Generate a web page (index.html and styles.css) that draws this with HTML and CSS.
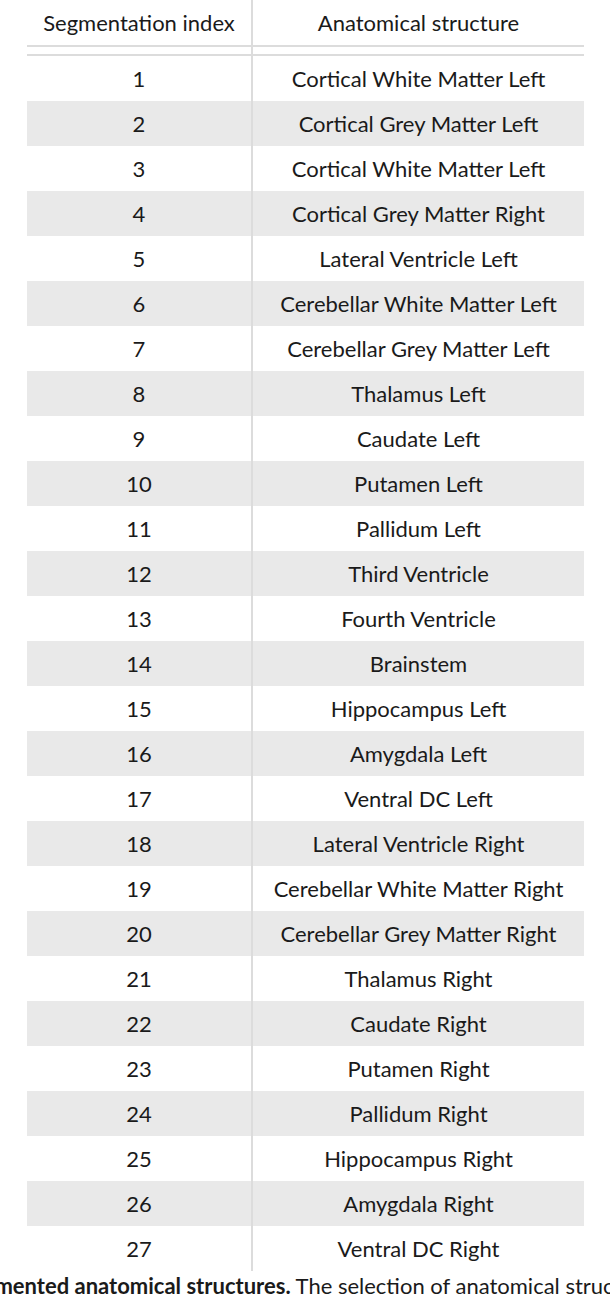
FILE: index.html
```html
<!DOCTYPE html>
<html>
<head>
<meta charset="utf-8">
<link rel="stylesheet" href="styles.css">
</head>
<body>
<div class="wrap">
<table class="seg">
<thead>
<tr><th class="idx">Segmentation index</th><th class="name">Anatomical structure</th></tr>
<tr class="sep"><td class="idx"></td><td class="name"></td></tr>
</thead>
<tbody>
<tr><td class="idx">1</td><td class="name">Cortical White Matter Left</td></tr>
<tr><td class="idx">2</td><td class="name">Cortical Grey Matter Left</td></tr>
<tr><td class="idx">3</td><td class="name">Cortical White Matter Left</td></tr>
<tr><td class="idx">4</td><td class="name">Cortical Grey Matter Right</td></tr>
<tr><td class="idx">5</td><td class="name">Lateral Ventricle Left</td></tr>
<tr><td class="idx">6</td><td class="name">Cerebellar White Matter Left</td></tr>
<tr><td class="idx">7</td><td class="name">Cerebellar Grey Matter Left</td></tr>
<tr><td class="idx">8</td><td class="name">Thalamus Left</td></tr>
<tr><td class="idx">9</td><td class="name">Caudate Left</td></tr>
<tr><td class="idx">10</td><td class="name">Putamen Left</td></tr>
<tr><td class="idx">11</td><td class="name">Pallidum Left</td></tr>
<tr><td class="idx">12</td><td class="name">Third Ventricle</td></tr>
<tr><td class="idx">13</td><td class="name">Fourth Ventricle</td></tr>
<tr><td class="idx">14</td><td class="name">Brainstem</td></tr>
<tr><td class="idx">15</td><td class="name">Hippocampus Left</td></tr>
<tr><td class="idx">16</td><td class="name">Amygdala Left</td></tr>
<tr><td class="idx">17</td><td class="name">Ventral DC Left</td></tr>
<tr><td class="idx">18</td><td class="name">Lateral Ventricle Right</td></tr>
<tr><td class="idx">19</td><td class="name">Cerebellar White Matter Right</td></tr>
<tr><td class="idx">20</td><td class="name">Cerebellar Grey Matter Right</td></tr>
<tr><td class="idx">21</td><td class="name">Thalamus Right</td></tr>
<tr><td class="idx">22</td><td class="name">Caudate Right</td></tr>
<tr><td class="idx">23</td><td class="name">Putamen Right</td></tr>
<tr><td class="idx">24</td><td class="name">Pallidum Right</td></tr>
<tr><td class="idx">25</td><td class="name">Hippocampus Right</td></tr>
<tr><td class="idx">26</td><td class="name">Amygdala Right</td></tr>
<tr><td class="idx">27</td><td class="name">Ventral DC Right</td></tr>
</tbody>
</table>
</div>
<p class="caption"><b>Segmented anatomical structures.</b> The selection of anatomical structures was based on the segmentation protocol.</p>
</body>
</html>
```

FILE: styles.css
```css
html, body {
  margin: 0;
  padding: 0;
  background: #ffffff;
  overflow: hidden;
}
body {
  font-family: Lato, "Open Sans", sans-serif;
  color: #1a1a1a;
  width: 610px;
}
.wrap {
  padding-left: 27px;
}
.seg {
  width: 557px;
  border-collapse: separate;
  border-spacing: 0;
  table-layout: fixed;
  font-size: 22px;
}
.seg th, .seg td {
  padding: 0;
  text-align: center;
  vertical-align: middle;
  font-weight: normal;
  white-space: nowrap;
}
.seg .idx {
  width: 224px;
  border-right: 2px solid #dcdcdc;
}
.seg thead th {
  height: 45px;
  border-bottom: 2px solid #dcdcdc;
}
.seg .sep td {
  height: 7px;
  border-bottom: 2px solid #dcdcdc;
}
.seg tbody td {
  height: 45px;
}
.seg tbody tr:nth-child(even) td {
  background: #e9e9e9;
}
.caption {
  margin: 0;
  font-size: 22px;
  line-height: 30px;
  white-space: nowrap;
  text-indent: -41px;
  color: #1a1a1a;
}
.caption b {
  font-weight: bold;
}
```
